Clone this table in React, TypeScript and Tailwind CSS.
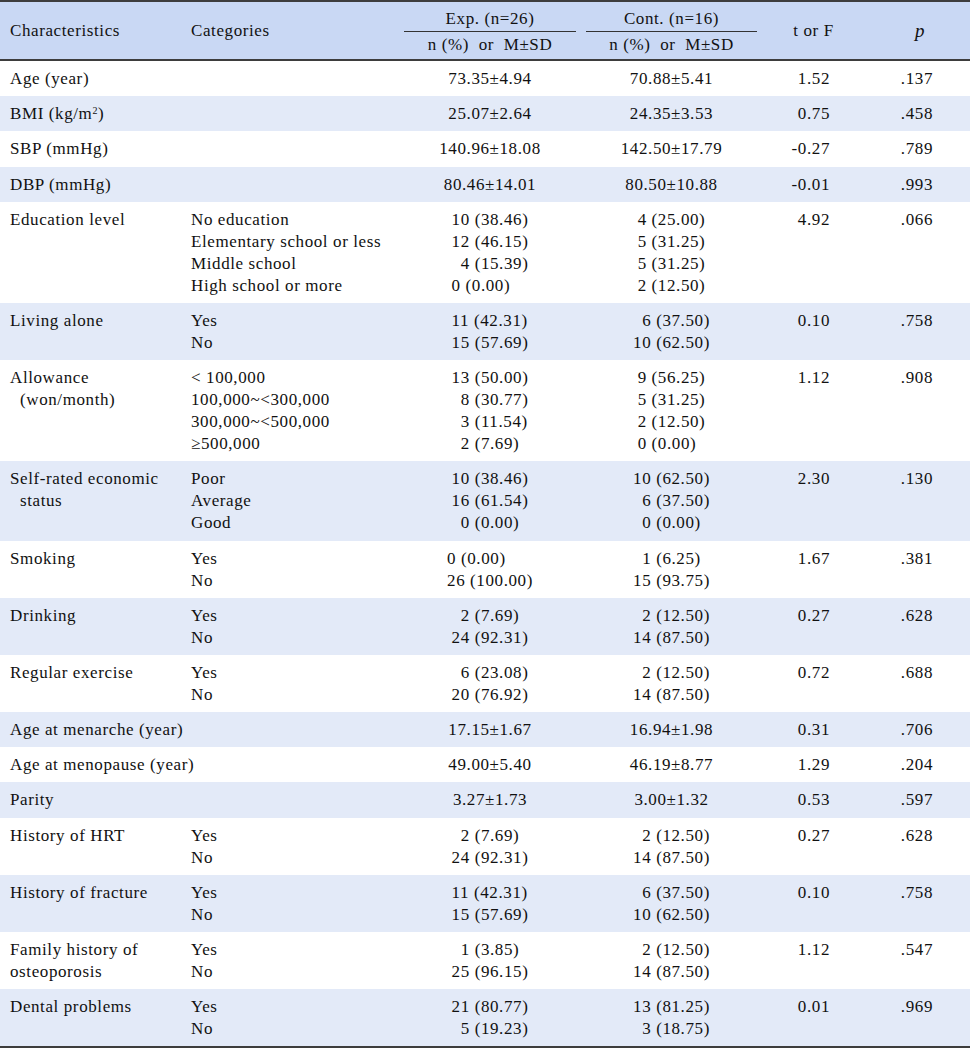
import React from 'react';

type Row = {
  c1: React.ReactNode[];
  c2?: string[];
  exp: string[];
  cont: string[];
  t: string;
  p: string;
  stripe?: boolean;
  span?: boolean;
  indent?: boolean;
};

// "_" at the start of a value keeps a hidden digit in front, so the digits line up
const rows: Row[] = [
  { c1: ['Age (year)'], exp: ['73.35±4.94'], cont: ['70.88±5.41'], t: '1.52', p: '.137' },
  {
    c1: [
      <>
        BMI (kg/m<sup className="text-[10px]">2</sup>)
      </>,
    ],
    exp: ['25.07±2.64'],
    cont: ['24.35±3.53'],
    t: '0.75',
    p: '.458',
    stripe: true,
  },
  { c1: ['SBP (mmHg)'], exp: ['140.96±18.08'], cont: ['142.50±17.79'], t: '-0.27', p: '.789' },
  { c1: ['DBP (mmHg)'], exp: ['80.46±14.01'], cont: ['80.50±10.88'], t: '-0.01', p: '.993', stripe: true },
  {
    c1: ['Education level'],
    c2: ['No education', 'Elementary school or less', 'Middle school', 'High school or more'],
    exp: ['10 (38.46)', '12 (46.15)', '_4 (15.39)', '0 (0.00)'],
    cont: ['4 (25.00)', '5 (31.25)', '5 (31.25)', '2 (12.50)'],
    t: '4.92',
    p: '.066',
  },
  {
    c1: ['Living alone'],
    c2: ['Yes', 'No'],
    exp: ['11 (42.31)', '15 (57.69)'],
    cont: ['_6 (37.50)', '10 (62.50)'],
    t: '0.10',
    p: '.758',
    stripe: true,
  },
  {
    c1: ['Allowance', '(won/month)'],
    indent: true,
    c2: ['< 100,000', '100,000~<300,000', '300,000~<500,000', '≥500,000'],
    exp: ['13 (50.00)', '_8 (30.77)', '_3 (11.54)', '_2 (7.69)'],
    cont: ['9 (56.25)', '5 (31.25)', '2 (12.50)', '0 (0.00)'],
    t: '1.12',
    p: '.908',
  },
  {
    c1: ['Self-rated economic', 'status'],
    indent: true,
    c2: ['Poor', 'Average', 'Good'],
    exp: ['10 (38.46)', '16 (61.54)', '_0 (0.00)'],
    cont: ['10 (62.50)', '_6 (37.50)', '_0 (0.00)'],
    t: '2.30',
    p: '.130',
    stripe: true,
  },
  {
    c1: ['Smoking'],
    c2: ['Yes', 'No'],
    exp: ['0 (0.00)', '26 (100.00)'],
    cont: ['_1 (6.25)', '15 (93.75)'],
    t: '1.67',
    p: '.381',
  },
  {
    c1: ['Drinking'],
    c2: ['Yes', 'No'],
    exp: ['_2 (7.69)', '24 (92.31)'],
    cont: ['_2 (12.50)', '14 (87.50)'],
    t: '0.27',
    p: '.628',
    stripe: true,
  },
  {
    c1: ['Regular exercise'],
    c2: ['Yes', 'No'],
    exp: ['_6 (23.08)', '20 (76.92)'],
    cont: ['_2 (12.50)', '14 (87.50)'],
    t: '0.72',
    p: '.688',
  },
  { c1: ['Age at menarche (year)'], span: true, exp: ['17.15±1.67'], cont: ['16.94±1.98'], t: '0.31', p: '.706', stripe: true },
  { c1: ['Age at menopause (year)'], span: true, exp: ['49.00±5.40'], cont: ['46.19±8.77'], t: '1.29', p: '.204' },
  { c1: ['Parity'], exp: ['3.27±1.73'], cont: ['3.00±1.32'], t: '0.53', p: '.597', stripe: true },
  {
    c1: ['History of HRT'],
    c2: ['Yes', 'No'],
    exp: ['_2 (7.69)', '24 (92.31)'],
    cont: ['_2 (12.50)', '14 (87.50)'],
    t: '0.27',
    p: '.628',
  },
  {
    c1: ['History of fracture'],
    c2: ['Yes', 'No'],
    exp: ['11 (42.31)', '15 (57.69)'],
    cont: ['_6 (37.50)', '10 (62.50)'],
    t: '0.10',
    p: '.758',
    stripe: true,
  },
  {
    c1: ['Family history of', 'osteoporosis'],
    c2: ['Yes', 'No'],
    exp: ['_1 (3.85)', '25 (96.15)'],
    cont: ['_2 (12.50)', '14 (87.50)'],
    t: '1.12',
    p: '.547',
  },
  {
    c1: ['Dental problems'],
    c2: ['Yes', 'No'],
    exp: ['21 (80.77)', '_5 (19.23)'],
    cont: ['13 (81.25)', '_3 (18.75)'],
    t: '0.01',
    p: '.969',
    stripe: true,
  },
];

const cols = 'grid grid-cols-[181px_223px_172px_10px_171px_113px_1fr]';

const Values: React.FC<{ lines: string[] }> = ({ lines }) => (
  <div className="flex justify-center">
    <div className="flex flex-col items-start">
      {lines.map((l, i) =>
        l.startsWith('_') ? (
          <span key={i} className="whitespace-pre">
            <span className="invisible">0</span>
            {l.slice(1)}
          </span>
        ) : (
          <span key={i} className="whitespace-pre">
            {l}
          </span>
        )
      )}
    </div>
  </div>
);

const App: React.FC = () => {
  return (
    <div className="w-[970px] bg-white font-['Liberation_Serif',serif] text-[17px] leading-[22px] tracking-[0.6px] text-[#111]">
      <div className={`${cols} grid-rows-[29px_1px_27px] border-y-2 border-[#3d3d3d] bg-[#c9d8f4]`}>
        <div className="row-span-3 flex items-center pl-[10px]">Characteristics</div>
        <div className="row-span-3 flex items-center pl-[10px]">Categories</div>
        <div className="flex items-end justify-center pb-[1px]">Exp. (n=26)</div>
        <div className="row-span-3" />
        <div className="flex items-end justify-center pb-[1px]">Cont. (n=16)</div>
        <div className="row-span-3 flex items-center justify-center">t or F</div>
        <div className="row-span-3 flex items-center justify-center text-[19px] italic">p</div>
        <div className="bg-[#333]" />
        <div className="bg-[#333]" />
        <div className="flex items-start justify-center whitespace-pre pt-[2px]">n (%)  or  M±SD</div>
        <div className="flex items-start justify-center whitespace-pre pt-[2px]">n (%)  or  M±SD</div>
      </div>

      {rows.map((r, i) => (
        <div key={i} className={`${cols} pt-[7px] pb-[6.2px] ${r.stripe ? 'bg-[#e3eaf8]' : 'bg-white'}`}>
          <div className={`flex flex-col pl-[10px] ${r.span ? 'col-span-2 whitespace-nowrap' : ''}`}>
            {r.c1.map((t, j) => (
              <span key={j} className={j > 0 && r.indent ? 'pl-[10px]' : ''}>
                {t}
              </span>
            ))}
          </div>
          {!r.span && (
            <div className="flex flex-col pl-[10px]">
              {(r.c2 ?? []).map((t, j) => (
                <span key={j} className="whitespace-nowrap">
                  {t}
                </span>
              ))}
            </div>
          )}
          <Values lines={r.exp} />
          <div />
          <Values lines={r.cont} />
          <div className="pr-[40px] text-right">{r.t}</div>
          <div className="pr-[37px] text-right">{r.p}</div>
        </div>
      ))}
      <div className="h-[2px] bg-[#3d3d3d]" />
    </div>
  );
};

export default App;
